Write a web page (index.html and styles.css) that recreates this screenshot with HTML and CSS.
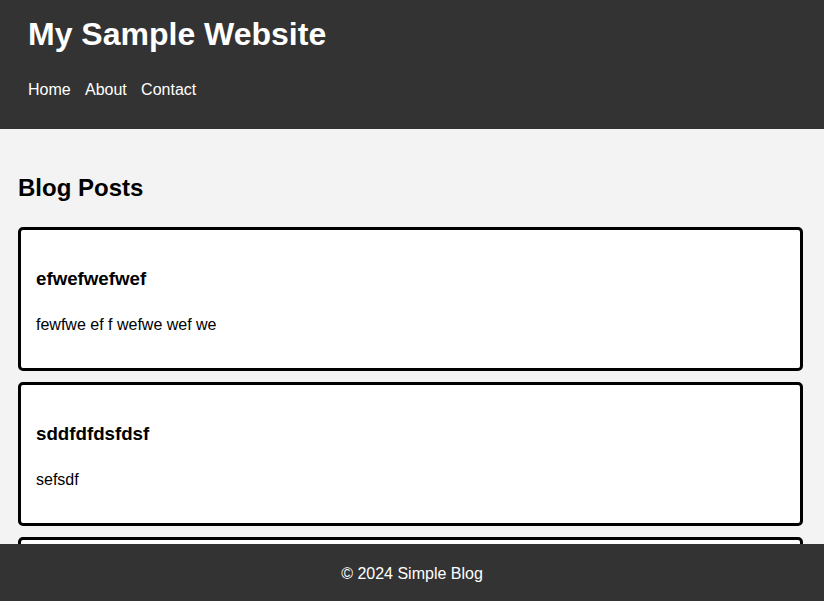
FILE: index.html
```html
<!DOCTYPE html>
<html lang="en">
<head>
<meta charset="utf-8">
<title>My Sample Website</title>
<link rel="stylesheet" href="styles.css">
</head>
<body>
<header class="site-header">
  <h1 class="site-title">My Sample Website</h1>
  <nav class="site-nav">
    <a href="#" class="nav-link">Home</a>
    <a href="#" class="nav-link">About</a>
    <a href="#" class="nav-link">Contact</a>
  </nav>
</header>
<main class="content">
  <h2 class="section-title">Blog Posts</h2>
  <div class="posts">
    <article class="post">
      <h3 class="post-title">efwefwefwef</h3>
      <p class="post-body">fewfwe ef f wefwe wef we</p>
    </article>
    <article class="post">
      <h3 class="post-title">sddfdfdsfdsf</h3>
      <p class="post-body">sefsdf</p>
    </article>
    <article class="post">
      <h3 class="post-title">asdasd</h3>
      <p class="post-body">asdasd</p>
    </article>
  </div>
</main>
<footer class="site-footer">
  <p class="footer-text">&copy; 2024 Simple Blog</p>
</footer>
</body>
</html>
```

FILE: styles.css
```css
html, body {
  margin: 0;
  padding: 0;
}

body {
  font-family: "Liberation Sans", Arial, sans-serif;
  font-size: 16px;
  background: #f3f3f3;
  color: #000;
}

.site-header {
  background: #333;
  color: #fff;
  height: 129px;
  box-sizing: border-box;
  padding: 16px 28px 0;
}

.site-title {
  margin: 0;
  font-size: 32px;
  font-weight: bold;
  line-height: normal;
}

.site-nav {
  display: flex;
  gap: 14.3px;
  margin-top: 27.7px;
}

.nav-link {
  color: #fff;
  text-decoration: none;
  font-size: 16px;
}

.content {
  padding: 45.3px 21px 80px 18px;
}

.section-title {
  margin: 0;
  font-size: 24px;
  font-weight: bold;
  line-height: normal;
}

.posts {
  margin-top: 25px;
  display: flex;
  flex-direction: column;
  gap: 11px;
}

.post {
  background: #fff;
  border: 3px solid #000;
  border-radius: 5px;
  padding: 0 15px;
  height: 144px;
  box-sizing: border-box;
}

.post-title {
  margin: 38px 0 0;
  font-size: 18.72px;
  font-weight: bold;
  line-height: normal;
}

.post-body {
  margin: 25.8px 0 0;
  font-size: 16px;
  line-height: normal;
}

.site-footer {
  position: fixed;
  left: 0;
  right: 0;
  bottom: 0;
  height: 57px;
  box-sizing: border-box;
  padding-top: 2px;
  background: #333;
  color: #fff;
  display: flex;
  align-items: center;
  justify-content: center;
}

.footer-text {
  margin: 0;
  font-size: 16px;
}
```
